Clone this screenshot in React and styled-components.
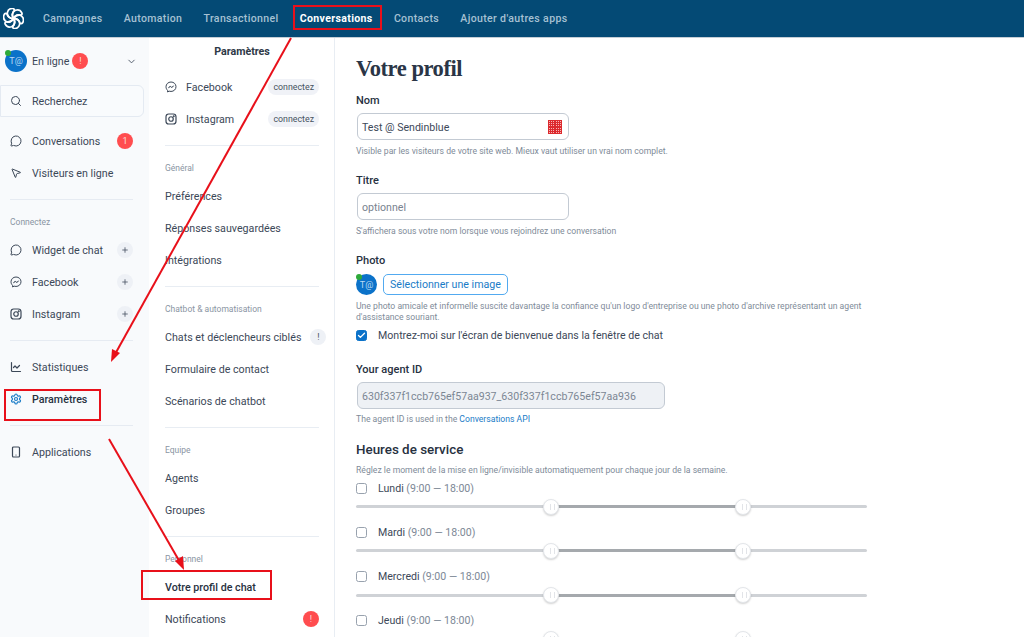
import React from "react";
import styled, { createGlobalStyle } from "styled-components";
import { MessageCircle, MousePointer2, Search, ChevronDown, ChartLine, Settings, Smartphone, Plus, Check } from "lucide-react";

const Global = createGlobalStyle`
  html, body { margin: 0; padding: 0; background: #fff; }
  * { box-sizing: border-box; }
  svg { flex: none; }
  body { font-family: Roboto, "Liberation Sans", sans-serif; color: #3c4858; }
`;

const Page = styled.div`
  position: relative; width: 1024px; height: 637px; overflow: hidden;
  display: flex; flex-direction: column; background: #fff;
`;
const TopBar = styled.header`
  height: 38px; flex: none; background: #044a75; border-bottom: 1px solid #c5ced6;
  display: flex; align-items: center; padding-left: 3px;
`;
const LogoBox = styled.div`width: 21px; height: 21px; display: flex; margin-right: 19px;`;
const NavItem = styled.a`
  font-size: 10.55px; letter-spacing: 0.35px; margin-right: 21.25px; font-weight: ${p => p.$active ? 700 : 500};
  color: ${p => p.$active ? "#fff" : "#a6c1d3"};
`;
const Body = styled.div`flex: 1; display: flex; min-height: 0;`;
const Sidebar = styled.nav`
  width: 149px; flex: none; background: #f8fafc; padding: 7px 0 0;
`;
const Status = styled.div`
  height: 32px; display: flex; align-items: center; padding: 0 12px 0 5px; font-size: 10.7px;
`;
const Avatar = styled.div`
  position: relative; width: ${p => p.$s}px; height: ${p => p.$s}px; border-radius: 50%; background: #0b72c9; flex: none;
  display: flex; align-items: center; justify-content: center; color: #b9d9f3; font-size: 9px;
  &::before { content: ""; position: absolute; left: 0; top: 0; width: 6px; height: 6px; border-radius: 50%; background: #2eaa3a; }
`;
const StatusText = styled.span`margin-left: 5px; flex: none;`;
const Dot = styled.span`
  width: 16px; height: 16px; border-radius: 50%; background: #ff4d4f; color: #fbdcdc; font-size: 9px; flex: none;
  display: inline-flex; align-items: center; justify-content: center; margin-left: ${p => p.$ml || 0}px;
`;
const Grow = styled.span`flex: 1;`;
const Trail = styled.span`margin-left: auto; flex: none; display: flex; align-items: center;`;
const SearchBox = styled.div`
  height: 32px; width: 144px; margin: 8px 0; background: #f9fbfd; border: 1px solid #e4eaf2; border-radius: 0 6px 6px 0;
  display: flex; align-items: center; padding-left: 9px; font-size: 10.7px; gap: 10px;
`;
const Row = styled.div`
  height: 32px; display: flex; align-items: center; font-size: 10.7px; padding: 0 16px 0 10px; gap: 10px; white-space: nowrap;
  font-weight: ${p => p.$bold ? 500 : 400}; color: ${p => p.$bold ? "#27313f" : "#3c4858"};
`;
const Circle = styled.span`
  width: 16px; height: 16px; border-radius: 50%; background: #eef1f6; flex: none; display: flex; align-items: center;
  justify-content: center; color: #4a5565; font-size: 9px;
`;
const Divider = styled.div`height: 1px; background: #e6ebf2; margin: ${p => p.$m || "10px 16px 0 10px"};`;
const Caption = styled.div`
  font-size: 8.5px; color: #8a95a3; height: 12px; line-height: 12px; margin: 16px 0 6px; padding-left: ${p => p.$pl || 0}px;
`;
const Column = styled.nav`
  width: 186px; flex: none; background: #fff; border-right: 1px solid #e8edf3; padding: 0 15px 0 16px;
`;
const ColTitle = styled.div`
  font-size: 10.7px; font-weight: 700; text-align: center; height: 16px; line-height: 16px; margin-top: 6px; margin-bottom: 11px; color: #2e3947;
`;
const ColRow = styled.div`
  height: 32px; display: flex; align-items: center; font-size: 10.7px; gap: 9px; white-space: nowrap;
  font-weight: ${p => p.$bold ? 500 : 400}; color: ${p => p.$bold ? "#27313f" : "#3c4858"};
`;
const Pill = styled.span`
  font-size: 8.8px; background: #f0f2f7; border-radius: 8px; height: 16px; line-height: 16px; padding: 0 5px; color: #47525f;
`;
const ColDivider = styled.div`height: 1px; background: #e8edf3; margin-top: 10px;`;
const Main = styled.main`flex: 1; padding: 0 0 0 21px; min-width: 0;`;
const Title = styled.h1`
  font: 700 22.5px/28px "Liberation Serif", serif; letter-spacing: -0.45px; margin: 17px 0 0; color: #2a3546; height: 28px;
`;
const Label = styled.div`
  font-size: 11px; font-weight: 500; color: #27313f; line-height: 14px; height: 14px; margin-top: ${p => p.$mt}px;
`;
const Field = styled.div`
  width: ${p => p.$w}px; height: 27px; margin: 5px 0 0 1px; border: 1px solid #c3cad3; border-radius: 6px;
  background: ${p => p.$off ? "#eef1f5" : "#fff"}; display: flex; align-items: center; padding: 1px 6px 0 4px;
  font-size: 10.6px; color: ${p => p.$c || "#3c4858"}; justify-content: space-between;
`;
const Help = styled.div`
  font-size: 8.65px; color: #808b99; line-height: 11px; margin-top: ${p => p.$mt || 6}px; max-width: 530px;
`;
const HelpLink = styled.span`color: #1a7cc7;`;
const PhotoRow = styled.div`display: flex; align-items: center; gap: 6px; margin-top: 6px; height: 21px;`;
const OutlineButton = styled.button`
  height: 21px; width: 125px; padding: 0; border: 1px solid #52aaf0; border-radius: 5px; background: #fff; color: #1a7cc7;
  font: 400 10.65px Roboto, sans-serif;
`;
const CheckRow = styled.div`
  display: flex; align-items: center; gap: 11px; margin-top: ${p => p.$mt}px; height: 12px; font-size: 10.6px; color: #3c4858;
`;
const Box = styled.span`
  width: 11px; height: 11px; border-radius: 2.5px; flex: none; display: flex; align-items: center; justify-content: center;
  background: ${p => p.$on ? "#0b72c9" : "#fff"}; border: 1px solid ${p => p.$on ? "#0b72c9" : "#98a2ae"}; color: #fff;
`;
const Muted = styled.span`color: #7d8896;`;
const Heading = styled.h2`font-size: 13.4px; font-weight: 500; margin: 17px 0 0; line-height: 16px; height: 16px; color: #27313f;`;
const Slider = styled.div`position: relative; width: 511px; height: 3px; background: #cfd2d6; margin: 11px 0 18.3px; border-radius: 2px;`;
const Range = styled.div`position: absolute; left: 195px; width: 192px; top: 0; height: 3px; background: #a5a9ad;`;
const Thumb = styled.span`
  position: absolute; left: ${p => p.$x}px; top: -6.5px; width: 16px; height: 16px; border-radius: 50%; background: #fff;
  border: 1px solid #e3e6ea; box-shadow: 0 1px 2px rgba(0,0,0,.18);
  &::after { content: ""; position: absolute; left: 5.5px; top: 4px; width: 3px; height: 6px; border-left: 1px solid #e2e4e8; border-right: 1px solid #e2e4e8; }
`;
const Overlay = styled.svg`position: absolute; left: 0; top: 0; pointer-events: none;`;
const RedBox = styled.div`
  position: absolute; left: ${p => p.$x}px; top: ${p => p.$y}px; width: ${p => p.$w}px; height: ${p => p.$h}px;
  border: 2px solid #e8101a; pointer-events: none;
`;

const Messenger = () => (
  <svg width="12" height="12" viewBox="0 0 24 24" fill="none" stroke="#3c4858" strokeWidth="2" strokeLinejoin="round">
    <path d="M12 2C6.4 2 2 6.2 2 11.6c0 2.9 1.2 5.3 3.2 7V22l3-1.7c1.2.4 2.5.6 3.8.6 5.6 0 10-4.1 10-9.5S17.6 2 12 2z"/>
    <path d="M6.5 14l3.7-4 2.5 2.3L17.5 9.5l-3.7 4-2.5-2.3z" fill="#3c4858" strokeWidth="1"/>
  </svg>
);
const Insta = () => (
  <svg width="12" height="12" viewBox="0 0 24 24" fill="none" stroke="#3c4858" strokeWidth="2.4">
    <rect x="2" y="2" width="20" height="20" rx="5.5"/><circle cx="12" cy="12" r="4.5"/><circle cx="17.5" cy="6.5" r="0.8" fill="#3c4858"/>
  </svg>
);
const Logo = () => (
  <svg width="21" height="21" viewBox="0 0 26 26" fill="none" stroke="#fff" strokeWidth="2.2" strokeLinecap="round">
    {[0,60,120,180,240,300].map(a => (
      <g key={a} transform={`rotate(${a} 13 13)`}>
        <path d="M13 13C10.5 9.5 11 4.5 15.5 2.8C19 1.7 22 3.5 23.3 6C24 7.5 23 9 21.5 8.8C18 8.2 15 9.5 13 13Z"/>
      </g>
    ))}
  </svg>
);
const dotRows = [1, 3, 5, 8, 10, 12];
const dotCols = [1, 3, 5, 8, 10, 12];
const Emoji = () => (
  <svg width="14" height="14" viewBox="0 0 14 14" shapeRendering="crispEdges">
    <rect width="14" height="14" rx="1.5" fill="#dc2a2e"/>
    {dotRows.map(y => dotCols.map(x => <rect key={`${x}-${y}`} x={x} y={y} width="1" height="1" fill="#f7b4b6" />))}
  </svg>
);

const days = ["Lundi", "Mardi", "Mercredi", "Jeudi"];
const nav = ["Campagnes", "Automation", "Transactionnel", "Conversations", "Contacts", "Ajouter d'autres apps"];

const SideItem = ({ icon, label, plus, bold, badge }) => (
  <Row $bold={bold}>
    {icon}<span>{label}</span>
    {plus && <Trail><Circle><Plus size={8} strokeWidth={2.5} /></Circle></Trail>}
    {badge && <Trail><Dot>{badge}</Dot></Trail>}
  </Row>
);

export default function App() {
  return (
    <Page>
      <Global />
      <TopBar>
        <LogoBox><Logo /></LogoBox>
        {nav.map(n => <NavItem key={n} $active={n === "Conversations"}>{n}</NavItem>)}
      </TopBar>
      <Body>
        <Sidebar>
          <Status>
            <Avatar $s={22}>T@</Avatar>
            <StatusText>En ligne</StatusText>
            <Dot $ml={3}>!</Dot>
            <Grow />
            <ChevronDown size={11} color="#4a5565" />
          </Status>
          <SearchBox><Search size={12} color="#3c4858" />Recherchez</SearchBox>
          <SideItem icon={<MessageCircle size={12} />} label="Conversations" badge="1" />
          <SideItem icon={<MousePointer2 size={12} />} label="Visiteurs en ligne" />
          <Divider />
          <Caption $pl={10}>Connectez</Caption>
          <SideItem icon={<MessageCircle size={12} />} label="Widget de chat" plus />
          <SideItem icon={<Messenger />} label="Facebook" plus />
          <SideItem icon={<Insta />} label="Instagram" plus />
          <Divider $m="10px 16px 10px 10px" />
          <SideItem icon={<ChartLine size={12} strokeWidth={2.4} />} label="Statistiques" />
          <SideItem icon={<Settings size={12} color="#1a7cc7" strokeWidth={2.4} />} label="Paramètres" bold />
          <Divider $m="10px 16px 10px 10px" />
          <SideItem icon={<Smartphone size={12} strokeWidth={2.4} />} label="Applications" />
        </Sidebar>
        <Column>
          <ColTitle>Paramètres</ColTitle>
          <ColRow><Messenger /><span>Facebook</span><Trail><Pill>connectez</Pill></Trail></ColRow>
          <ColRow><Insta /><span>Instagram</span><Trail><Pill>connectez</Pill></Trail></ColRow>
          <ColDivider />
          <Caption>Général</Caption>
          <ColRow>Préférences</ColRow>
          <ColRow>Réponses sauvegardées</ColRow>
          <ColRow>Intégrations</ColRow>
          <ColDivider />
          <Caption>Chatbot &amp; automatisation</Caption>
          <ColRow><span>Chats et déclencheurs ciblés</span><Trail><Circle>!</Circle></Trail></ColRow>
          <ColRow>Formulaire de contact</ColRow>
          <ColRow>Scénarios de chatbot</ColRow>
          <ColDivider />
          <Caption>Equipe</Caption>
          <ColRow>Agents</ColRow>
          <ColRow>Groupes</ColRow>
          <ColDivider />
          <Caption>Personnel</Caption>
          <ColRow $bold>Votre profil de chat</ColRow>
          <ColRow><span>Notifications</span><Trail><Dot>!</Dot></Trail></ColRow>
        </Column>
        <Main>
          <Title>Votre profil</Title>
          <Label $mt={11}>Nom</Label>
          <Field $w={212}>Test @ Sendinblue<Emoji /></Field>
          <Help>Visible par les visiteurs de votre site web. Mieux vaut utiliser un vrai nom complet.</Help>
          <Label $mt={17}>Titre</Label>
          <Field $w={212} $c="#79838f">optionnel</Field>
          <Help>S'affichera sous votre nom lorsque vous rejoindrez une conversation</Help>
          <Label $mt={17}>Photo</Label>
          <PhotoRow>
            <Avatar $s={21}>T@</Avatar>
            <OutlineButton>Sélectionner une image</OutlineButton>
          </PhotoRow>
          <Help>Une photo amicale et informelle suscite davantage la confiance qu'un logo d'entreprise ou une photo d'archive représentant un agent d'assistance souriant.</Help>
          <CheckRow $mt={6}><Box $on><Check size={9} strokeWidth={3.5} /></Box>Montrez-moi sur l'écran de bienvenue dans la fenêtre de chat</CheckRow>
          <Label $mt={22}>Your agent ID</Label>
          <Field $w={308} $off $c="#7c8794">630f337f1ccb765ef57aa937_630f337f1ccb765ef57aa936</Field>
          <Help $mt={5}>The agent ID is used in the <HelpLink>Conversations API</HelpLink></Help>
          <Heading>Heures de service</Heading>
          <Help $mt={7}>Réglez le moment de la mise en ligne/invisible automatiquement pour chaque jour de la semaine.</Help>
          {days.map(d => (
            <React.Fragment key={d}>
              <CheckRow $mt={6}><Box /><span>{d} <Muted>(9:00 — 18:00)</Muted></span></CheckRow>
              <Slider><Range /><Thumb $x={187} /><Thumb $x={379} /></Slider>
            </React.Fragment>
          ))}
        </Main>
      </Body>
      <RedBox $x={293} $y={5} $w={89} $h={25} />
      <RedBox $x={4} $y={389} $w={97} $h={32} />
      <RedBox $x={141} $y={570} $w={131} $h={30} />
      <Overlay width="1024" height="637" viewBox="0 0 1024 637">
        <line x1="291" y1="38" x2="114" y2="356" stroke="#e8101a" strokeWidth="2" />
        <polygon points="111,362 112,349 120,353" fill="#e8101a" />
        <line x1="109" y1="439" x2="181" y2="564" stroke="#e8101a" strokeWidth="2" />
        <polygon points="184,570 175,561 183,556" fill="#e8101a" />
      </Overlay>
    </Page>
  );
}
